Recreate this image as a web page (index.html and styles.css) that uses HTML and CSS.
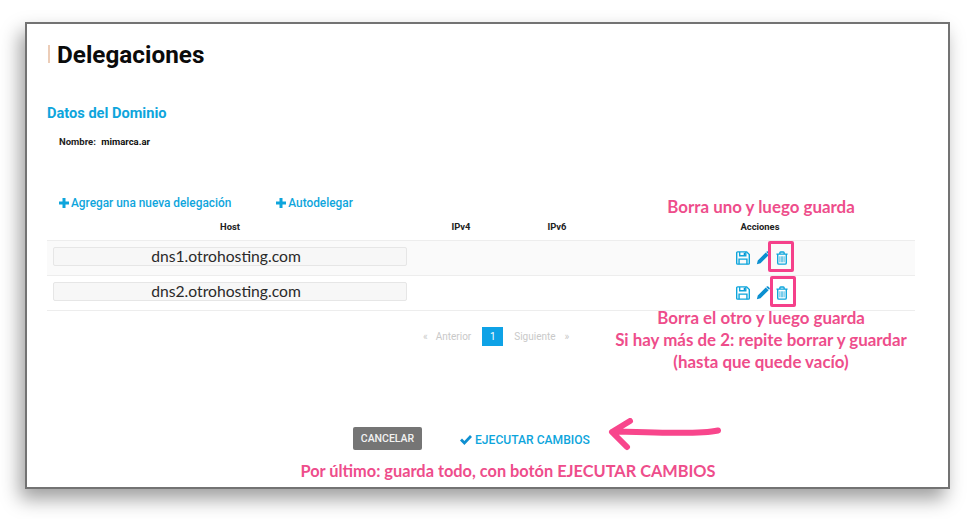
FILE: index.html
```html
<!DOCTYPE html>
<html lang="es">
<head>
<meta charset="utf-8">
<title>Delegaciones</title>
<link rel="stylesheet" href="styles.css">
</head>
<body>
<main class="frame">
  <h1 class="title">Delegaciones</h1>
  <h2 class="section">Datos del Dominio</h2>
  <p class="domain"><b>Nombre:</b> <b class="value">mimarca.ar</b></p>
  <nav class="links">
    <a class="link"><svg class="plus" viewBox="0 0 10 10"><path d="M3.5 0h3v3.5H10v3H6.5V10h-3V6.5H0v-3h3.5z"/></svg>Agregar una nueva delegación</a>
    <a class="link"><svg class="plus" viewBox="0 0 10 10"><path d="M3.5 0h3v3.5H10v3H6.5V10h-3V6.5H0v-3h3.5z"/></svg>Autodelegar</a>
  </nav>
  <section class="table">
    <div class="row head"><span>Host</span><span>IPv4</span><span>IPv6</span><span>Acciones</span></div>
    <div class="row body shaded">
      <div class="hostcell"><div class="host">dns1.otrohosting.com</div></div><span></span><span></span>
      <div class="actions">
        <svg class="ico" viewBox="0 0 16 16"><path class="ol" d="M1.8 1h10.4l3 3v10a1 1 0 0 1-1 1H1.8a1 1 0 0 1-1-1V2a1 1 0 0 1 1-1z"/><path class="ol" d="M4.2 1.2v4.3h7V1.2M3.5 15V9.3h9V15"/><path class="fl" d="M8.8 2h1.5v2.6H8.8z"/></svg>
        <svg class="ico" viewBox="0 0 16 16"><path class="fl" d="M11.2 1.6l3.2 3.2-9.2 9.2L1 15l1-4.2zM12.2.6a1.3 1.3 0 0 1 1.8 0l1.4 1.4a1.3 1.3 0 0 1 0 1.8l-.5.5-3.2-3.2z"/></svg>
        <svg class="ico trash" viewBox="0 0 14 16"><path class="ol" d="M.5 3.5h13M4.5 3.3V2a1 1 0 0 1 1-1h3a1 1 0 0 1 1 1v1.3M2 3.5v10.2A1.5 1.5 0 0 0 3.5 15.2h7a1.5 1.5 0 0 0 1.5-1.5V3.5"/><path class="ol thin" d="M4.5 6v7M6.2 6v7M7.8 6v7M9.5 6v7"/></svg>
        <span class="mark"></span>
      </div>
    </div>
    <div class="row body">
      <div class="hostcell"><div class="host">dns2.otrohosting.com</div></div><span></span><span></span>
      <div class="actions">
        <svg class="ico" viewBox="0 0 16 16"><path class="ol" d="M1.8 1h10.4l3 3v10a1 1 0 0 1-1 1H1.8a1 1 0 0 1-1-1V2a1 1 0 0 1 1-1z"/><path class="ol" d="M4.2 1.2v4.3h7V1.2M3.5 15V9.3h9V15"/><path class="fl" d="M8.8 2h1.5v2.6H8.8z"/></svg>
        <svg class="ico" viewBox="0 0 16 16"><path class="fl" d="M11.2 1.6l3.2 3.2-9.2 9.2L1 15l1-4.2zM12.2.6a1.3 1.3 0 0 1 1.8 0l1.4 1.4a1.3 1.3 0 0 1 0 1.8l-.5.5-3.2-3.2z"/></svg>
        <svg class="ico trash" viewBox="0 0 14 16"><path class="ol" d="M.5 3.5h13M4.5 3.3V2a1 1 0 0 1 1-1h3a1 1 0 0 1 1 1v1.3M2 3.5v10.2A1.5 1.5 0 0 0 3.5 15.2h7a1.5 1.5 0 0 0 1.5-1.5V3.5"/><path class="ol thin" d="M4.5 6v7M6.2 6v7M7.8 6v7M9.5 6v7"/></svg>
        <span class="mark second"></span>
      </div>
    </div>
  </section>
  <div class="pager">
    <span class="arrow">«</span><span>Anterior</span><span class="current">1</span><span class="next">Siguiente</span><span class="arrow">»</span>
  </div>
  <div class="buttons">
    <button class="cancel">CANCELAR</button>
    <a class="run"><svg class="check" viewBox="0 0 12 10"><path d="M4.4 10L0 5.5l2-2 2.4 2.4L10 0l2 2z"/></svg>EJECUTAR CAMBIOS</a>
  </div>
  <p class="note note-final">Por último: guarda todo, con botón EJECUTAR CAMBIOS</p>
  <p class="note note-one">Borra uno y luego guarda</p>
  <p class="note note-two">Borra el otro y luego guarda<br>Si hay más de 2: repite borrar y guardar<br>(hasta que quede vacío)</p>
  <svg class="big-arrow" viewBox="0 0 116 36"><path d="M111 12.5C95 16 60 15 6 13.5M23 3L5 14M5 14L20 29"/></svg>
</main>
</body>
</html>
```
FILE: styles.css
```css
* { box-sizing: border-box; }
html, body { margin: 0; padding: 0; }
body { width: 980px; height: 519px; overflow: hidden; background: #fff; font-family: Roboto, "Liberation Sans", sans-serif; }

.frame {
  position: relative;
  width: 925px;
  height: 467px;
  margin: 22px 0 0 25px;
  padding: 0 33px 0 20px;
  background: #fff;
  border: 2px solid #737373;
  box-shadow: -5px 10px 18px rgba(0, 0, 0, .38);
}

.title {
  margin: 16px 0 0 1px;
  padding-left: 9px;
  font-size: 24.3px;
  line-height: 30px;
  font-weight: 700;
  color: #0b0b0b;
  background: linear-gradient(#eccdb8, #eccdb8) left 5px / 2px 18px no-repeat;
}

.section {
  margin: 34px 0 0;
  font-size: 14.6px;
  line-height: 18px;
  font-weight: 700;
  color: #0ea5dc;
}

.domain {
  margin: 14px 0 0 12px;
  font-size: 9.5px;
  line-height: 12px;
  color: #222;
}
.domain .value { margin-left: 3px; color: #111; }

.links {
  display: flex;
  gap: 45px;
  margin: 47px 0 0 12px;
}
.link {
  display: flex;
  align-items: center;
  gap: 2px;
  font-size: 11.85px;
  line-height: 16px;
  font-weight: 500;
  color: #0ea5dc;
}
.plus { width: 10px; height: 10px; fill: #0ea5dc; }

.table { margin-top: 8px; width: 868px; }
.row { display: grid; grid-template-columns: 366px 96px 96px 310px; align-items: center; }
.head {
  height: 22px;
  text-align: center;
  font-size: 9.4px;
  font-weight: 700;
  color: #222;
  padding-bottom: 7px;
  border-bottom: 1px solid #ededed;
}
.body { height: 35px; border-bottom: 1px solid #ededed; }
.shaded { background: #fafafa; }
.hostcell { padding: 0 0 3px 6px; }
.host {
  width: 354px;
  height: 19px;
  background: #f7f7f7;
  border: 1px solid #e6e6e6;
  border-radius: 2px;
  padding-right: 8px;
  text-align: center;
  font-family: Lato, "Open Sans", sans-serif;
  font-size: 15.7px;
  line-height: 17px;
  color: #2a2a2a;
}

.actions { position: relative; display: flex; justify-content: center; align-items: center; gap: 6px; padding: 0 0 1px 3px; }
.ico { width: 14px; height: 14px; fill: none; }
.trash { width: 12px; }
.ol { fill: none; stroke: #0ea5dc; stroke-width: 1.6; }
.ol.thin { stroke-width: .8; }
.fl { fill: #0b8fd0; stroke: none; }
.mark {
  position: absolute;
  left: 163px;
  top: -10px;
  width: 26px;
  height: 31px;
  border: 3.5px solid #f5408a;
  border-radius: 2px;
}
.mark.second { left: 165px; }

.pager {
  display: flex;
  align-items: center;
  gap: 11px;
  margin: 16px 0 0 376px;
  font-size: 10px;
  color: #c9c9c9;
}
.pager .arrow { margin-right: -3px; }
.pager .next { margin-right: -2px; }
.current {
  width: 21px;
  height: 19px;
  background: #0ea2e6;
  color: #fff;
  text-align: center;
  line-height: 19px;
}

.buttons { display: flex; align-items: center; gap: 38px; margin: 81px 0 0 306px; }
.cancel {
  width: 69px;
  height: 23px;
  padding: 0;
  border: 0;
  border-radius: 2px;
  background: #757575;
  color: #f2f2f2;
  font: 500 10.5px/23px Roboto, sans-serif;
}
.run {
  display: flex;
  align-items: center;
  gap: 3px;
  padding-top: 3px;
  font-size: 12.1px;
  font-weight: 500;
  color: #0ea5dc;
}
.check { width: 12px; height: 10px; fill: #0e8fd0; }

.note {
  margin: 0;
  font-family: Lato, "Open Sans", sans-serif;
  font-size: 16.9px;
  font-weight: 700;
  color: #ee4d8b;
  text-align: center;
  white-space: nowrap;
  line-height: 22px;
}
.note-final { margin: 10px 0 0 27px; width: 868px; font-size: 16.35px; }
.note-one { position: absolute; left: 540px; top: 172px; width: 388px; }
.note-two { position: absolute; left: 540px; top: 283px; width: 388px; }
.big-arrow {
  position: absolute;
  left: 580px;
  top: 394px;
  width: 116px;
  height: 36px;
  fill: none;
  stroke: #f8468c;
  stroke-width: 6;
  stroke-linecap: round;
}
```
